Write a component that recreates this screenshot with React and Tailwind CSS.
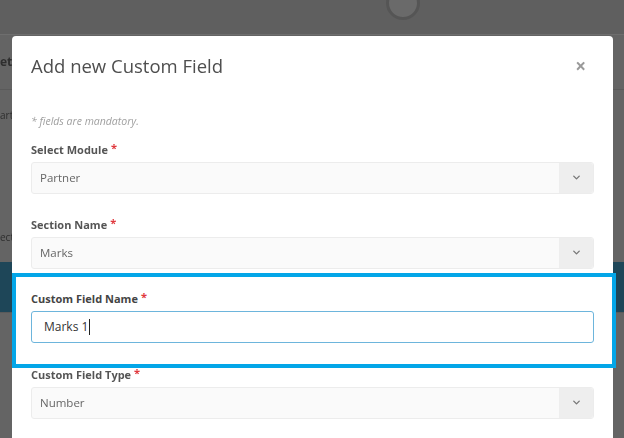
import { ChevronDown } from 'lucide-react';

const font = { fontFamily: '"Open Sans", "Noto Sans", sans-serif' };

function SelectField({ label, value, className = '' }) {
    return (
        <div className={className}>
            <div className="h-[14px] flex items-center text-[11px] font-bold text-[#555]">
                {label}
                <span className="text-[#e0393e] ml-[3px] -mt-[4px]">*</span>
            </div>
            <div className="mt-[5px] h-[32px] flex border border-[#ececec] rounded-[3px] bg-[#fafafa]">
                <div className="flex-1 flex items-center pl-[8px] text-[11.5px] text-[#666]">{value}</div>
                <div className="w-[34px] flex items-center justify-center bg-[#eeeeee] rounded-r-[3px]">
                    <ChevronDown className="w-[11px] h-[11px] text-[#777]" strokeWidth={3} />
                </div>
            </div>
        </div>
    );
}

export default function App() {
    return (
        <div className="relative w-[624px] h-[438px] overflow-hidden bg-[#646464]" style={font}>
            {/* page behind the overlay */}
            <div className="absolute inset-0 flex flex-col blur-[0.7px] text-[#2e2e2e]">
                <div className="h-[35px] shrink-0 flex justify-center border-b border-[#6e6e6e] bg-[#5f5f5f]">
                    <div className="ml-[182px] -mt-[14px] w-[34px] h-[34px] rounded-full border-[3px] border-[#555] bg-[#6a6a6a]"></div>
                </div>
                <div className="h-[55px] shrink-0 flex items-center text-[12px] font-bold border-b border-[#5a5a5a]">et</div>
                <div className="h-[50px] shrink-0 flex items-center text-[10px]">art</div>
                <div className="h-[122px] shrink-0 flex items-end pb-[17px] text-[10px]">ect</div>
                <div className="h-[50px] shrink-0 bg-[#1e4658]"></div>
                <div className="flex-1 border-t border-[#5a5a5a]"></div>
            </div>

            {/* modal */}
            <div className="relative ml-[12px] mt-[36px] w-[601px] h-[420px] bg-white rounded-t-[4px] px-[19px]">
                <div className="blur-[0.6px]">
                    <div className="h-[60px] flex items-center justify-between">
                        <h2 className="text-[18.5px] text-[#4e4e4e]">Add new Custom Field</h2>
                        <span className="mr-[8px] text-[19px] font-bold text-[#9a9a9a]">×</span>
                    </div>
                    <div className="mt-[18px] text-[10.5px] italic text-[#a0a0a0]">* fields are mandatory.</div>
                    <SelectField className="mt-[13px]" label="Select Module" value="Partner" />
                    <SelectField className="mt-[24px]" label="Section Name" value="Marks" />
                </div>

                <div className="mt-[23px]">
                    <div className="h-[14px] flex items-center text-[11px] font-bold text-[#444]">
                        Custom Field Name
                        <span className="text-[#e0393e] ml-[3px] -mt-[4px]">*</span>
                    </div>
                    <div className="mt-[5px] h-[32px] flex items-center border border-[#6db5dc] rounded-[3px] bg-white pl-[12px] text-[12px] text-[#333]">
                        Marks 1<span className="ml-[1px] w-px h-[16px] bg-[#222]"></span>
                    </div>
                </div>

                <div className="blur-[0.6px]">
                    <SelectField className="mt-[25px]" label="Custom Field Type" value="Number" />
                </div>
            </div>

            {/* highlight annotation */}
            <div className="absolute left-[12px] top-[273px] w-[604px] h-[95px] border-[4px] border-[#03a6e8]"></div>
        </div>
    );
}
